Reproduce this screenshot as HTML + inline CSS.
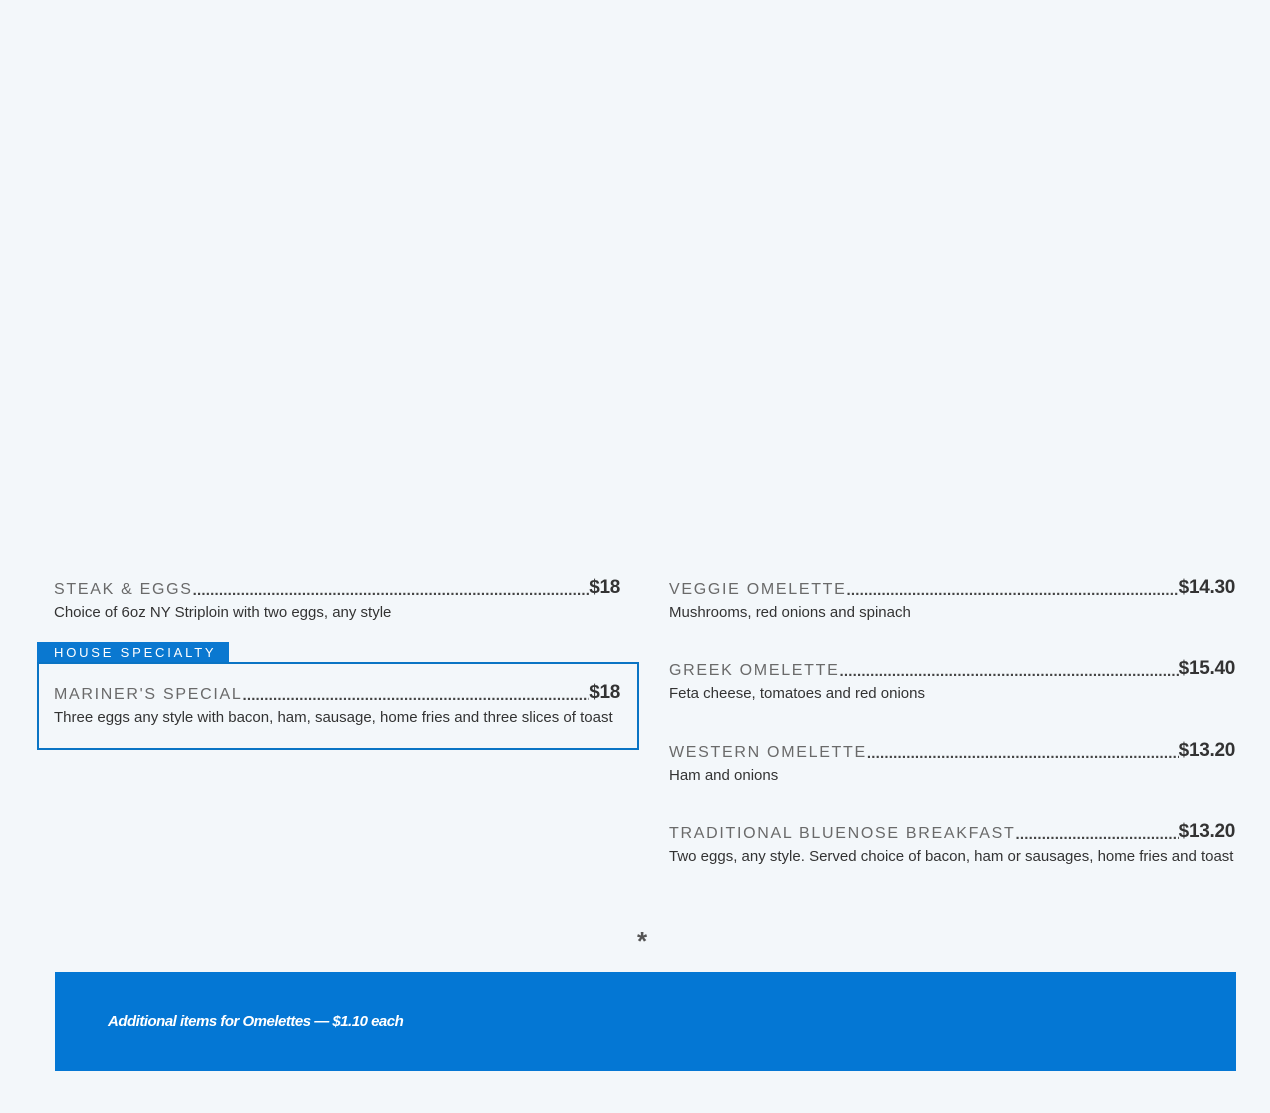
<!DOCTYPE html>
<html><head><meta charset="utf-8"><style>
body{margin:0;width:1270px;height:1113px;background:#f3f7fa;font-family:"Liberation Sans",sans-serif;position:relative;overflow:hidden;color:#333}
.it{position:absolute;width:566px}
.row{display:flex;align-items:flex-end;height:26px;overflow:hidden}
.nm{font-size:16px;letter-spacing:1.7px;color:#6a6a6a;white-space:nowrap;line-height:20px}
.dt{flex:1;overflow:hidden;white-space:nowrap;font-size:15px;color:#444;line-height:18px;letter-spacing:0.2px;font-weight:bold}
.pr{font-size:19px;font-weight:bold;color:#333;line-height:24px;white-space:nowrap;letter-spacing:-0.3px}
.ds{font-size:15px;margin-top:4px;letter-spacing:0}
</style></head><body>
<div class="it" style="left:54px;top:574px"><div class="row"><span class="nm">STEAK &amp; EGGS</span><span class="dt">................................................................................................................................</span><span class="pr">$18</span></div><div class="ds">Choice of 6oz NY Striploin with two eggs, any style</div></div>

<div style="position:absolute;left:37px;top:642px;width:192px;height:21px;background:#0a78d0;color:#fff;font-size:13px;letter-spacing:2.8px;line-height:21px;box-sizing:border-box;padding-left:17px">HOUSE SPECIALTY</div>
<div style="position:absolute;left:37px;top:662px;width:602px;height:88px;border:2px solid #0a74c4;box-sizing:border-box"></div>
<div class="it" style="left:54px;top:679px"><div class="row"><span class="nm">MARINER'S SPECIAL</span><span class="dt">................................................................................................................................</span><span class="pr">$18</span></div><div class="ds">Three eggs any style with bacon, ham, sausage, home fries and three slices of toast</div></div>

<div class="it" style="left:669px;top:574px"><div class="row"><span class="nm">VEGGIE OMELETTE</span><span class="dt">................................................................................................................................</span><span class="pr">$14.30</span></div><div class="ds">Mushrooms, red onions and spinach</div></div>
<div class="it" style="left:669px;top:655px"><div class="row"><span class="nm">GREEK OMELETTE</span><span class="dt">................................................................................................................................</span><span class="pr">$15.40</span></div><div class="ds">Feta cheese, tomatoes and red onions</div></div>
<div class="it" style="left:669px;top:737px"><div class="row"><span class="nm">WESTERN OMELETTE</span><span class="dt">................................................................................................................................</span><span class="pr">$13.20</span></div><div class="ds">Ham and onions</div></div>
<div class="it" style="left:669px;top:818px"><div class="row"><span class="nm">TRADITIONAL BLUENOSE BREAKFAST</span><span class="dt">................................................................................................................................</span><span class="pr">$13.20</span></div><div class="ds">Two eggs, any style. Served choice of bacon, ham or sausages, home fries and toast</div></div>

<div style="position:absolute;left:637px;top:926px;font-size:26px;color:#555;font-weight:bold;line-height:30px">*</div>
<div style="position:absolute;left:55px;top:972px;width:1181px;height:99px;background:#0477d4"></div>
<div style="position:absolute;left:108px;top:1013px;color:#fff;font-size:15px;font-style:italic;font-weight:bold;letter-spacing:-0.5px">Additional items for Omelettes — $1.10 each</div>
</body></html>
